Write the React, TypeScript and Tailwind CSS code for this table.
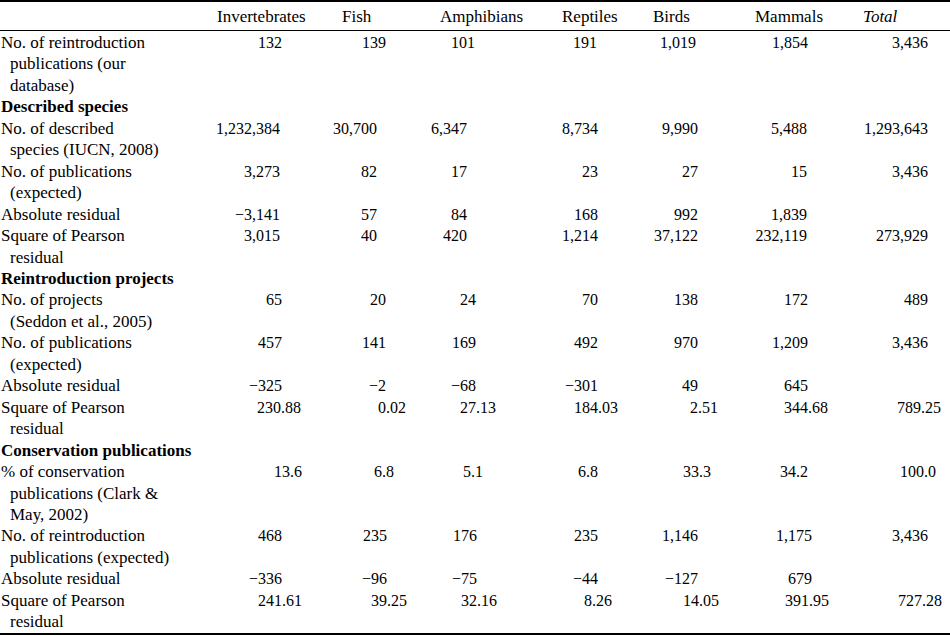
import React from 'react';

type Row = {
  lines: string[];
  vals?: string[];
  edges?: number[];
  section?: boolean;
};

// right edge (x, px) of the integer part of each value column
const ROW1 = [282, 386, 475, 597, 696, 808, 928];
const DESC = [280, 377, 467, 598, 698, 807, 928];
const PROJ = [282, 386, 476, 598, 698, 808, 928];
const PROJ_DEC = [281, 386, 476, 598, 698, 808, 921];
const CONS = [290, 382, 471, 586, 699, 796, 924];
const CONS_EXP = [282, 387, 477, 598, 698, 812, 928];
const CONS_DEC = [282, 387, 477, 592, 699, 809, 922];
const LABEL_W = 210;

const headers = ['Invertebrates', 'Fish', 'Amphibians', 'Reptiles', 'Birds', 'Mammals', 'Total'];
const headerWidths = [125, 98, 122, 91, 102, 108, 87];

const rows: Row[] = [
  {
    lines: ['No. of reintroduction', 'publications (our', 'database)'],
    vals: ['132', '139', '101', '191', '1,019', '1,854', '3,436'],
    edges: ROW1,
  },
  { lines: ['Described species'], section: true },
  {
    lines: ['No. of described', 'species (IUCN, 2008)'],
    vals: ['1,232,384', '30,700', '6,347', '8,734', '9,990', '5,488', '1,293,643'],
    edges: DESC,
  },
  {
    lines: ['No. of publications', '(expected)'],
    vals: ['3,273', '82', '17', '23', '27', '15', '3,436'],
    edges: DESC,
  },
  {
    lines: ['Absolute residual'],
    vals: ['−3,141', '57', '84', '168', '992', '1,839', ''],
    edges: DESC,
  },
  {
    lines: ['Square of Pearson', 'residual'],
    vals: ['3,015', '40', '420', '1,214', '37,122', '232,119', '273,929'],
    edges: DESC,
  },
  { lines: ['Reintroduction projects'], section: true },
  {
    lines: ['No. of projects', '(Seddon et al., 2005)'],
    vals: ['65', '20', '24', '70', '138', '172', '489'],
    edges: PROJ,
  },
  {
    lines: ['No. of publications', '(expected)'],
    vals: ['457', '141', '169', '492', '970', '1,209', '3,436'],
    edges: PROJ,
  },
  {
    lines: ['Absolute residual'],
    vals: ['−325', '−2', '−68', '−301', '49', '645', ''],
    edges: PROJ,
  },
  {
    lines: ['Square of Pearson', 'residual'],
    vals: ['230.88', '0.02', '27.13', '184.03', '2.51', '344.68', '789.25'],
    edges: PROJ_DEC,
  },
  { lines: ['Conservation publications'], section: true },
  {
    lines: ['% of conservation', 'publications (Clark &', 'May, 2002)'],
    vals: ['13.6', '6.8', '5.1', '6.8', '33.3', '34.2', '100.0'],
    edges: CONS,
  },
  {
    lines: ['No. of reintroduction', 'publications (expected)'],
    vals: ['468', '235', '176', '235', '1,146', '1,175', '3,436'],
    edges: CONS_EXP,
  },
  {
    lines: ['Absolute residual'],
    vals: ['−336', '−96', '−75', '−44', '−127', '679', ''],
    edges: CONS_EXP,
  },
  {
    lines: ['Square of Pearson', 'residual'],
    vals: ['241.61', '39.25', '32.16', '8.26', '14.05', '391.95', '727.28'],
    edges: CONS_DEC,
  },
];

function Value({ v, width }: { v: string; width: number }) {
  const dot = v.indexOf('.');
  const whole = dot < 0 ? v : v.slice(0, dot);
  const frac = dot < 0 ? '' : v.slice(dot);
  return (
    <div className="flex shrink-0 justify-end" style={{ width }}>
      <span className="whitespace-nowrap">{whole}</span>
      {frac && <span className="w-0 shrink-0 whitespace-nowrap">{frac}</span>}
    </div>
  );
}

function DataRow({ row }: { row: Row }) {
  if (row.section) {
    return <div className="pl-px font-bold text-[17px]">{row.lines[0]}</div>;
  }
  const edges = row.edges ?? PROJ;
  return (
    <div className="flex">
      <div className="shrink-0 pl-px text-[17px]" style={{ width: LABEL_W }}>
        {row.lines.map((l, i) => (
          <div key={i} className={i === 0 ? 'whitespace-nowrap' : 'whitespace-nowrap pl-[9px]'}>
            {l}
          </div>
        ))}
      </div>
      <div className="flex text-[16px]">
        {row.vals?.map((v, i) => (
          <Value key={i} v={v} width={edges[i] - (i === 0 ? LABEL_W : edges[i - 1])} />
        ))}
      </div>
    </div>
  );
}

export default function App() {
  return (
    <div className="h-[636px] w-[950px] overflow-hidden bg-white text-black [font-family:Liberation_Serif,serif] leading-[21.45px]">
      <div className="border-t-2 border-b-[1.5px] border-black">
        <div className="flex h-[28px] items-center pt-[2px] text-[17px]">
          <div className="w-[217px] shrink-0" />
          {headers.map((h, i) => (
            <div
              key={h}
              className={i === 6 ? 'shrink-0 italic' : 'shrink-0'}
              style={{ width: headerWidths[i] }}
            >
              {h}
            </div>
          ))}
        </div>
      </div>
      <div className="border-b-2 border-black pt-[1px]">
        {rows.map((r, i) => (
          <DataRow key={i} row={r} />
        ))}
      </div>
    </div>
  );
}
